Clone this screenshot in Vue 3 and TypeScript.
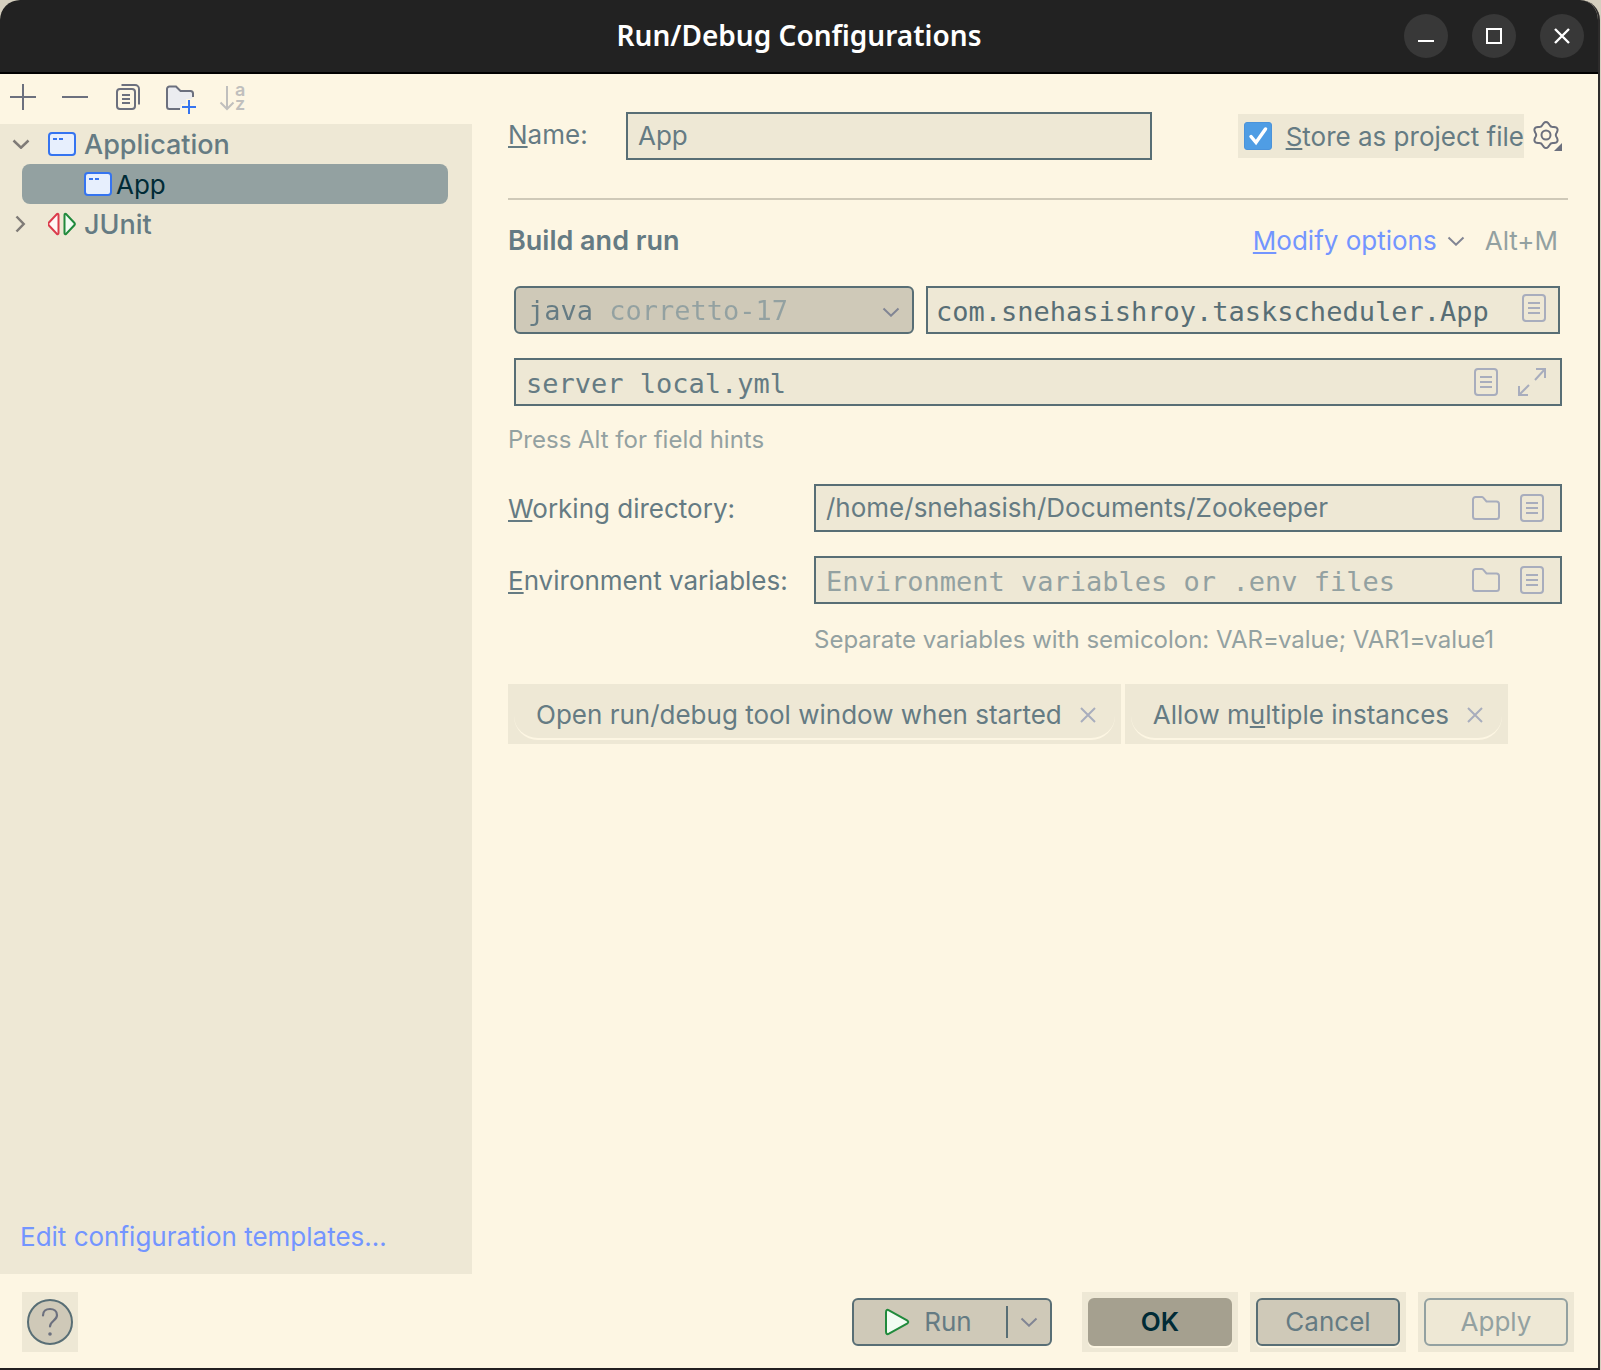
<script setup lang="ts">
import { ref } from 'vue'

const name = ref('App')
const storeAsFile = ref(true)
const jre = ref('corretto-17')
const mainClass = ref('com.snehasishroy.taskscheduler.App')
const programArgs = ref('server local.yml')
const workingDir = ref('/home/snehasish/Documents/Zookeeper')
const envVars = ref('')

// Six-lobed gear outline, sampled along a rippled circle
const gearPoints: string = Array.from({ length: 72 }, (_, i) => {
  const a = (i * 5 * Math.PI) / 180
  const r = 11.4 + 1.6 * Math.cos(6 * (a - Math.PI / 2))
  return `${(14 + r * Math.cos(a)).toFixed(2)},${(15 - r * Math.sin(a)).toFixed(2)}`
}).join(' ')
</script>

<template>
  <div class="window">
    <svg class="defs" aria-hidden="true">
      <symbol id="i-doc" viewBox="0 0 24 28">
        <rect x="1" y="1" width="22" height="26" rx="3" />
        <path d="M6 9h12M6 14h12M6 19h12" />
      </symbol>
      <symbol id="i-folder" viewBox="0 0 28 24">
        <path d="M1 20.500V3.500A2.500 2.500 0 0 1 3.500 1h6.300a2 2 0 0 1 1.400.6L14.500 5.500H24.500A2.500 2.500 0 0 1 27 8v12.500a2.500 2.500 0 0 1-2.500 2.500h-21A2.500 2.500 0 0 1 1 20.500Z" />
      </symbol>
      <symbol id="i-app" viewBox="0 0 28 24">
        <rect x="1" y="1" width="26" height="22" rx="3" fill="#e7effd" stroke="#3574f0" stroke-width="2" />
        <path d="M5 7h4M11 7h4" stroke="#3574f0" stroke-width="2" />
      </symbol>
      <symbol id="i-down" viewBox="0 0 18 10">
        <path d="M1.500 1.500 9 8.700 16.500 1.500" />
      </symbol>
      <symbol id="i-close" viewBox="0 0 16 16">
        <path d="M1 1 15 15M15 1 1 15" />
      </symbol>
    </svg>

    <header class="titlebar">
      <h1>Run/Debug Configurations</h1>
      <div class="controls">
        <button type="button" aria-label="Minimize">
          <svg width="16" height="16"><path d="M0 13h16" stroke="#fff" stroke-width="2" /></svg>
        </button>
        <button type="button" aria-label="Maximize">
          <svg width="16" height="16"><rect x="1" y="1" width="14" height="14" fill="none" stroke="#fff" stroke-width="2" /></svg>
        </button>
        <button type="button" aria-label="Close">
          <svg width="16" height="16"><path d="M1 1 15 15M15 1 1 15" stroke="#fff" stroke-width="2.400" /></svg>
        </button>
      </div>
    </header>

    <main class="body">
      <aside class="side">
        <div class="toolbar">
          <button type="button" aria-label="Add">
            <svg width="30" height="30"><path d="M2 15h26M15 2v26" class="ln" /></svg>
          </button>
          <button type="button" aria-label="Remove">
            <svg width="30" height="30"><path d="M2 15h26" class="ln" /></svg>
          </button>
          <button type="button" aria-label="Copy">
            <svg width="30" height="30">
              <rect x="5" y="7" width="18" height="20" rx="3" class="ln" />
              <path d="M10 13h8M10 17h8M10 21h8" class="ln" />
              <path d="M9.500 3H23a4 4 0 0 1 4 4v15.500" class="ln" />
            </svg>
          </button>
          <button type="button" aria-label="New folder">
            <svg width="34" height="34">
              <g transform="translate(2 2)">
                <path d="M3 25V7a2.500 2.500 0 0 1 2.500-2.500H12l4.500 4.500H26.500A2.500 2.500 0 0 1 29 11.500V15L18 27H5Z" fill="#ebecf0" />
                <path d="M16 27H5.500A2.500 2.500 0 0 1 3 24.500V7a2.500 2.500 0 0 1 2.500-2.500H12l4.500 4.500H26.500A2.500 2.500 0 0 1 29 11.500V15" class="ln" />
                <path d="M25 17v15M17 25h15" stroke="#fdf6e3" stroke-width="6" />
                <path d="M25 18v14M18 25h14" stroke="#3574f0" stroke-width="2" />
              </g>
            </svg>
          </button>
          <button type="button" aria-label="Sort configurations" disabled>
            <svg width="30" height="30">
              <path d="M11 4v23M4.500 20.500 11 27l6.500-6.500" fill="none" stroke="#c0bfbd" stroke-width="2" />
              <text x="19" y="14">a</text>
              <text x="19" y="28">z</text>
            </svg>
          </button>
        </div>

        <div class="tree-pane">
          <ul class="tree">
            <li class="node">
              <span class="arrow"><svg width="18" height="10"><use href="#i-down" /></svg></span>
              <svg width="28" height="24"><use href="#i-app" /></svg>
              <b>Application</b>
            </li>
            <li class="node child">
              <svg width="28" height="24"><use href="#i-app" /></svg>
              <span>App</span>
            </li>
            <li class="node">
              <span class="arrow"><svg width="18" height="18"><path d="M4.500 1.500 11.700 9 4.500 16.500" /></svg></span>
              <svg width="28" height="24" viewBox="1 0 28 24">
                <path d="M1.500 11 9.700 2.200Q11.500 1 11.500 3V21Q11.500 23 9.700 21.800L1.500 13Q.8 12 1.500 11Z" fill="#fff7f7" stroke="#db3b4b" stroke-width="2" />
                <path d="M27.500 11 19.300 2.200Q17.500 1 17.500 3V21Q17.500 23 19.300 21.800L27.500 13Q28.200 12 27.500 11Z" fill="#f2fcf3" stroke="#208a3c" stroke-width="2" />
              </svg>
              <b>JUnit</b>
            </li>
          </ul>
          <a class="link" href="#templates">Edit configuration templates…</a>
        </div>
      </aside>

      <form class="panel" @submit.prevent>
        <div class="row name-row">
          <label for="cfg-name"><u>N</u>ame:</label>
          <div class="field"><input id="cfg-name" v-model="name" type="text" /></div>
          <label class="store">
            <input v-model="storeAsFile" type="checkbox" />
            <span><u>S</u>tore as project file</span>
          </label>
          <button class="bare" type="button" aria-label="Storage settings">
            <svg width="30" height="32">
              <polygon :points="gearPoints" class="ln" />
              <circle cx="14" cy="15" r="4.500" class="ln" />
              <path d="M30 23v8h-8Z" fill="#6c707e" />
            </svg>
          </button>
        </div>

        <hr />

        <div class="row heading">
          <h2>Build and run</h2>
          <a class="link" href="#modify"><u>M</u>odify options</a>
          <svg class="dim" width="18" height="10"><use href="#i-down" /></svg>
          <kbd>Alt+M</kbd>
        </div>

        <div class="launch">
          <div class="select">
            <select v-model="jre" class="mono" aria-label="Java runtime">
              <option value="corretto-17">java corretto-17</option>
            </select>
            <svg class="dim" width="18" height="10"><use href="#i-down" /></svg>
          </div>
          <div class="field main mono">
            <input v-model="mainClass" type="text" aria-label="Main class" />
            <button class="bare" type="button" aria-label="Browse classes"><svg width="24" height="28"><use href="#i-doc" /></svg></button>
          </div>
        </div>

        <div class="row args">
          <div class="field mono">
            <input v-model="programArgs" type="text" aria-label="Program arguments" />
            <button class="bare" type="button" aria-label="Insert macros"><svg width="24" height="28"><use href="#i-doc" /></svg></button>
            <button class="bare" type="button" aria-label="Expand">
              <svg width="28" height="28"><path d="M17 12 27 1M18 1h9v9M11 17 1 27M10 27H1v-9" /></svg>
            </button>
          </div>
        </div>
        <p class="hint">Press Alt for field hints</p>

        <div class="row wide first">
          <label for="cfg-dir"><u>W</u>orking directory:</label>
          <div class="field">
            <input id="cfg-dir" v-model="workingDir" type="text" />
            <button class="bare" type="button" aria-label="Browse folder"><svg width="28" height="24"><use href="#i-folder" /></svg></button>
            <button class="bare" type="button" aria-label="Insert macros"><svg width="24" height="28"><use href="#i-doc" /></svg></button>
          </div>
        </div>
        <div class="row wide">
          <label for="cfg-env"><u>E</u>nvironment variables:</label>
          <div class="field mono">
            <input id="cfg-env" v-model="envVars" type="text" placeholder="Environment variables or .env files" />
            <button class="bare" type="button" aria-label="Browse env files"><svg width="28" height="24"><use href="#i-folder" /></svg></button>
            <button class="bare" type="button" aria-label="Edit variables"><svg width="24" height="28"><use href="#i-doc" /></svg></button>
          </div>
        </div>
        <p class="hint indent">Separate variables with semicolon: VAR=value; VAR1=value1</p>

        <div class="row chips">
          <div class="chip">
            <span>Open run/debug tool window when started</span>
            <button class="bare" type="button" aria-label="Remove tool window option"><svg width="16" height="16"><use href="#i-close" /></svg></button>
          </div>
          <div class="chip">
            <span>Allow m<u>u</u>ltiple instances</span>
            <button class="bare" type="button" aria-label="Remove multiple instances option"><svg width="16" height="16"><use href="#i-close" /></svg></button>
          </div>
        </div>
      </form>
    </main>

    <footer class="footer">
      <div class="frame help">
        <button type="button" aria-label="Help">
          <svg width="18" height="30">
            <path d="M2 8.500C2 4.200 5 2 9 2s7 2.400 7 6.200c0 5.300-7 5.800-7 11.300" fill="none" stroke="#6c707e" stroke-width="2.200" stroke-linecap="round" />
            <circle cx="9" cy="27" r="1.800" fill="#6c707e" />
          </svg>
        </button>
      </div>
      <div class="run">
        <button type="button" class="go">
          <svg width="26" height="28"><path d="M2 4.500Q2 .8 5 2.300L23 12.300Q25.500 14 23 15.700L5 25.700Q2 27.200 2 23.500Z" fill="#f2fcf3" stroke="#208a3c" stroke-width="2" /></svg>
          Run
        </button>
        <button type="button" class="more" aria-label="More run options">
          <svg class="dim" width="18" height="10"><use href="#i-down" /></svg>
        </button>
      </div>
      <div class="frame"><button type="button" class="btn ok">OK</button></div>
      <div class="frame"><button type="button" class="btn">Cancel</button></div>
      <div class="frame"><button type="button" class="btn" disabled>Apply</button></div>
    </footer>
  </div>
</template>

<style>
body {
  background: #d5cfbf;
}
</style>

<style scoped>
* {
  box-sizing: border-box;
}
.window {
  display: flex;
  flex-direction: column;
  min-height: 100vh;
  margin-right: 1px;
  border-right: 2px solid #2d2b2b;
  border-bottom: 2px solid #231f20;
  border-radius: 20px 20px 0 0;
  background: #fdf6e3;
  color: #657b83;
  font: 26px/32px Inter, sans-serif;
  overflow: hidden;
}
.defs {
  position: absolute;
  width: 0;
  height: 0;
}
svg {
  display: block;
  flex: none;
}
.ln {
  fill: none;
  stroke: #6c707e;
  stroke-width: 2;
}
button,
input,
select {
  font: inherit;
  color: inherit;
  margin: 0;
  padding: 0;
}
button {
  display: flex;
  align-items: center;
  justify-content: center;
  border: 0;
  background: none;
}
u {
  text-decoration: underline 2px;
  text-underline-offset: 2px;
  text-decoration-skip-ink: none;
}
.link {
  color: #7395ff;
  text-decoration: none;
}
.mono {
  font-family: "DejaVu Sans Mono", monospace;
  font-size: 27px;
}

.titlebar {
  display: flex;
  align-items: center;
  height: 74px;
  padding: 0 14px 0 194px;
  border-bottom: 2px solid #000;
  background: #222;
}
.titlebar h1 {
  flex: 1;
  margin: 0;
  padding-bottom: 2px;
  text-align: center;
  color: #fff;
  font: 600 28px/36px "Noto Sans", sans-serif;
}
.controls {
  display: flex;
  gap: 24px;
}
.controls button {
  width: 44px;
  height: 44px;
  border-radius: 50%;
  background: #383838;
}

.body {
  flex: 1;
  display: flex;
}
.side {
  flex: 0 0 472px;
  display: flex;
  flex-direction: column;
}
.toolbar {
  display: flex;
  align-items: center;
  gap: 22px;
  height: 50px;
  padding: 0 8px 4px;
}
.toolbar button {
  width: 30px;
}
.toolbar svg {
  overflow: visible;
}
.toolbar text {
  fill: #c0bfbd;
  font: 600 18px Inter, sans-serif;
}
.tree-pane {
  flex: 1;
  display: flex;
  flex-direction: column;
  justify-content: space-between;
  background: #eee8d5;
}
.tree {
  margin: 0;
  padding: 0;
  list-style: none;
}
.node {
  display: flex;
  align-items: center;
  height: 40px;
  padding-left: 12px;
}
.node b {
  margin-left: 8px;
  font-size: 27px;
  font-weight: 500;
}
.node b,
.child span {
  padding-top: 2px;
}
.arrow {
  width: 36px;
}
.arrow svg {
  fill: none;
  stroke: #7f7b77;
  stroke-width: 2.500px;
}
.child {
  gap: 4px;
  margin: 0 24px 0 22px;
  padding-left: 62px;
  border-radius: 8px;
  background: #93a1a1;
  color: #002b36;
}
.tree-pane .link {
  padding: 0 20px 21px;
}

.panel {
  flex: 1;
  min-width: 0;
  padding: 38px 30px 0 36px;
}
.row {
  display: flex;
  align-items: center;
}
.field {
  flex: 1;
  min-width: 0;
  display: flex;
  align-items: center;
  gap: 20px;
  height: 48px;
  padding: 0 16px 0 10px;
  border: 2px solid #586e75;
  background: #eee8d5;
}
.field input {
  flex: 1;
  min-width: 0;
  height: 34px;
  padding-bottom: 2px;
  border: 0;
  outline: 0;
  background: none;
}
.field.mono input {
  padding: 2px 0 0;
}
.field input::placeholder {
  color: #93a1a1;
  opacity: 1;
}
.field svg,
.chip svg {
  fill: none;
  stroke: #a8adbd;
  stroke-width: 2px;
}
.dim {
  fill: none;
  stroke: #818594;
  stroke-width: 2px;
}
.name-row > label:first-child {
  width: 118px;
  padding-bottom: 2px;
}
.store {
  display: flex;
  align-items: center;
  gap: 14px;
  height: 44px;
  margin: 0 8px 0 86px;
  padding-left: 6px;
  background: #eee8d5;
  white-space: nowrap;
}
.store span,
.wide > label,
.chip span {
  padding-top: 2px;
}
.store input {
  appearance: none;
  width: 28px;
  height: 28px;
  border: 1px solid #4b93da;
  border-radius: 3px;
  background: #4f9de4 url("data:image/svg+xml,%3Csvg xmlns='http://www.w3.org/2000/svg' viewBox='0 0 26 26'%3E%3Cpath d='M6 13.500 11 19.500 20.500 6' fill='none' stroke='%23fff' stroke-width='3.500' stroke-linecap='round'/%3E%3C/svg%3E") center / 26px no-repeat;
}
.name-row .bare {
  margin-right: 6px;
}
hr {
  height: 2px;
  margin: 38px 0 25px;
  border: 0;
  background: #cfc9b8;
}
.heading {
  height: 32px;
  padding-right: 10px;
}
h2 {
  flex: 1;
  margin: 0;
  font: inherit;
  font-size: 27px;
  font-weight: 600;
}
.heading .dim {
  margin: 0 20px 0 10px;
}
kbd {
  color: #93a1a1;
  font: inherit;
}
.launch {
  display: grid;
  grid-template-columns: minmax(0, 400fr) minmax(0, 634fr);
  gap: 12px;
  margin-top: 29px;
  padding: 0 8px 0 6px;
}
.select {
  position: relative;
}
.field.main {
  gap: 8px;
  padding: 0 12px 0 8px;
  color: #586e75;
}
.main svg {
  margin-bottom: 4px;
}
.select select {
  display: block;
  width: 100%;
  height: 48px;
  padding: 2px 50px 0 12px;
  appearance: none;
  border: 2px solid #586e75;
  border-radius: 6px;
  color: #657b83;
  -webkit-text-fill-color: transparent;
  background:
    linear-gradient(90deg, #657b83 86px, #93a1a1 86px) text,
    linear-gradient(#cfc9b8, #cfc9b8) border-box;
}
.select .dim {
  position: absolute;
  right: 14px;
  top: 21px;
  pointer-events: none;
}
.args {
  margin-top: 24px;
  padding: 0 6px;
}
.args .field {
  padding-right: 14px;
}
.hint {
  margin: 19px 0 29px;
  color: #93a1a1;
  font-size: 24px;
  line-height: 30px;
}
.indent {
  margin: 21px 0 29px 306px;
}
.wide {
  margin-top: 24px;
  padding-right: 6px;
}
.first {
  margin-top: 0;
}
.wide > label {
  flex: 0 0 306px;
}
.chips {
  gap: 4px;
}
.chip {
  position: relative;
  display: flex;
  align-items: center;
  gap: 18px;
  height: 60px;
  padding: 0 25px 0 28px;
  background: #eee8d5;
  white-space: nowrap;
}
.chip .bare {
  padding-top: 2px;
}
.chip::after {
  content: "";
  position: absolute;
  inset: 6px 6px 4px;
  border: 0 solid #fdf6e3;
  border-bottom-width: 2px;
  border-radius: 24px;
  pointer-events: none;
}

.footer {
  display: flex;
  align-items: center;
  gap: 12px;
  height: 94px;
  padding: 2px 24px 0 22px;
}
.frame {
  padding: 6px;
  background: #eee8d5;
}
.btn {
  width: 144px;
  height: 48px;
  border: 2px solid #586e75;
  border-radius: 6px;
  background: #cfc9b8;
  box-shadow: 0 2px #fdf6e3;
}
.btn.ok {
  border-color: #a5a08f;
  background: #a5a08f;
  color: #002b36;
  font-weight: 600;
}
.btn:disabled {
  border-color: #93a1a1;
  background: none;
  color: #93a1a1;
  box-shadow: none;
}
.help {
  margin-right: auto;
  padding: 7px 5px;
}
.help button {
  width: 46px;
  height: 46px;
  border: 2px solid #586e75;
  border-radius: 50%;
  background: #cfc9b8;
}
.run {
  display: flex;
  align-items: center;
  height: 48px;
  margin-right: 18px;
  border: 2px solid #586e75;
  border-radius: 6px;
  background: #cfc9b8;
}
.go {
  gap: 14px;
  width: 152px;
  height: 32px;
  padding-right: 4px;
}
.more {
  width: 44px;
  height: 32px;
  border-left: 2px solid #586e75;
}
</style>
